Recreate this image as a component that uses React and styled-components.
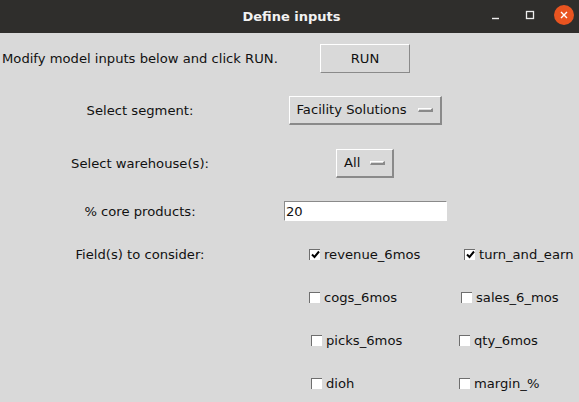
import React, { useState } from "react";
import styled, { createGlobalStyle } from "styled-components";

const Global = createGlobalStyle`
  html, body {
    margin: 0;
    padding: 0;
    background: #d9d9d9;
  }
  body {
    font-family: "DejaVu Sans", sans-serif;
    font-size: 13.15px;
    color: #111;
  }
`;

const Window = styled.div`
  width: 579px;
  height: 402px;
  overflow: hidden;
  background: #d9d9d9;
`;

const TitleBar = styled.div`
  height: 33px;
  background: #2f2e2c;
  display: flex;
  align-items: center;
  justify-content: center;
  position: relative;
`;

const Title = styled.div`
  color: #f2f2f2;
  font-weight: bold;
  font-size: 13px;
  margin-left: 4px;
`;

const Controls = styled.div`
  position: absolute;
  right: 5px;
  top: 0;
  height: 30px;
  display: flex;
  align-items: center;
  gap: 14px;
`;

const Ctl = styled.div`
  width: 20px;
  height: 20px;
  display: flex;
  align-items: center;
  justify-content: center;
  border-radius: 50%;
  background: ${(p) => (p.$close ? "#e95420" : "transparent")};
`;

const Form = styled.div`
  display: grid;
  grid-template-columns: 280px 170px 129px;
  grid-template-rows: 51px 52px 54px 42px 44px 43px 43px 42px;
  align-items: center;
`;

const Intro = styled.div`
  padding-left: 2px;
  white-space: nowrap;
`;

const Label = styled.div`
  justify-self: center;
  white-space: nowrap;
`;

const Raised = styled.button`
  justify-self: center;
  font: inherit;
  color: #111;
  background: #d9d9d9;
  border-style: solid;
  border-color: #fff #8a8a8a #8a8a8a #fff;
  border-width: 1px 2px 2px 1px;
  height: 29px;
  padding: 0;
  display: flex;
  align-items: center;
  box-sizing: border-box;
`;

const RunButton = styled(Raised)`
  width: 90px;
  border-width: 1px;
  justify-content: center;
  padding-bottom: 1px;
`;

const MenuButton = styled(Raised)`
  width: ${(p) => p.$w}px;
  padding-left: ${(p) => p.$pl}px;
  padding-right: 7px;
  justify-content: space-between;
`;

const Indicator = styled.span`
  width: 15px;
  height: 4px;
  box-sizing: border-box;
  border-style: solid;
  border-width: 1px 2px 2px 1px;
  border-color: #fff #8a8a8a #8a8a8a #fff;
  background: #d9d9d9;
`;

const Entry = styled.input`
  justify-self: start;
  margin-left: 4px;
  width: 163px;
  height: 20px;
  box-sizing: border-box;
  font: inherit;
  color: #111;
  background: #fff;
  border-style: solid;
  border-width: 1px;
  border-color: #8a8a8a #fff #fff #8a8a8a;
  padding: 0 1px;
  outline: none;
`;

const Check = styled.label`
  justify-self: start;
  margin-left: ${(p) => p.$ml}px;
  display: flex;
  align-items: center;
  gap: 4px;
  white-space: nowrap;
  cursor: default;
`;

const Box = styled.span`
  width: 11px;
  height: 11px;
  box-sizing: border-box;
  background: #fff;
  border-style: solid;
  border-width: 1px 0 0 1px;
  border-color: #6e6e6e;
  display: flex;
  align-items: center;
  justify-content: center;
`;

function CheckItem({ label, ml, on, onToggle }) {
  return (
    <Check $ml={ml} onClick={onToggle}>
      <Box>
        {on && (
          <svg width="9" height="9" viewBox="0 0 9 9">
            <path d="M1 4.5 L3.5 7 L8 1.5" stroke="#000" strokeWidth="2" fill="none" />
          </svg>
        )}
      </Box>
      <span>{label}</span>
    </Check>
  );
}

const fields = [
  ["revenue_6mos", 29, "turn_and_earn", 14],
  ["cogs_6mos", 29, "sales_6_mos", 11],
  ["picks_6mos", 31, "qty_6mos", 9],
  ["dioh", 31, "margin_%", 9],
];

export default function App() {
  const [checked, setChecked] = useState({ revenue_6mos: true, turn_and_earn: true });
  const [core, setCore] = useState("20");

  const toggle = (k) => setChecked((c) => ({ ...c, [k]: !c[k] }));

  return (
    <Window>
      <Global />
      <TitleBar>
        <Title>Define inputs</Title>
        <Controls>
          <Ctl>
            <svg width="10" height="10" viewBox="0 0 10 10">
              <path d="M1 8.5 H8" stroke="#eee" strokeWidth="1.4" />
            </svg>
          </Ctl>
          <Ctl>
            <svg width="10" height="10" viewBox="0 0 10 10">
              <rect x="1.5" y="1.5" width="7" height="7" stroke="#eee" strokeWidth="1.3" fill="none" />
            </svg>
          </Ctl>
          <Ctl $close>
            <svg width="10" height="10" viewBox="0 0 10 10">
              <path d="M2 2 L8 8 M8 2 L2 8" stroke="#fff" strokeWidth="1.4" />
            </svg>
          </Ctl>
        </Controls>
      </TitleBar>

      <Form>
        <Intro>Modify model inputs below and click RUN.</Intro>
        <RunButton>RUN</RunButton>
        <div />

        <Label>Select segment:</Label>
        <MenuButton $w={153} $pl={7}>
          Facility Solutions <Indicator />
        </MenuButton>
        <div />

        <Label>Select warehouse(s):</Label>
        <MenuButton $w={58} $pl={7}>
          All <Indicator />
        </MenuButton>
        <div />

        <Label>% core products:</Label>
        <Entry value={core} onChange={(e) => setCore(e.target.value)} />
        <div />

        {fields.map(([a, ma, b, mb], i) => (
          <React.Fragment key={a}>
            {i === 0 ? <Label>Field(s) to consider:</Label> : <div />}
            <CheckItem label={a} ml={ma} on={!!checked[a]} onToggle={() => toggle(a)} />
            <CheckItem label={b} ml={mb} on={!!checked[b]} onToggle={() => toggle(b)} />
          </React.Fragment>
        ))}
      </Form>
    </Window>
  );
}
